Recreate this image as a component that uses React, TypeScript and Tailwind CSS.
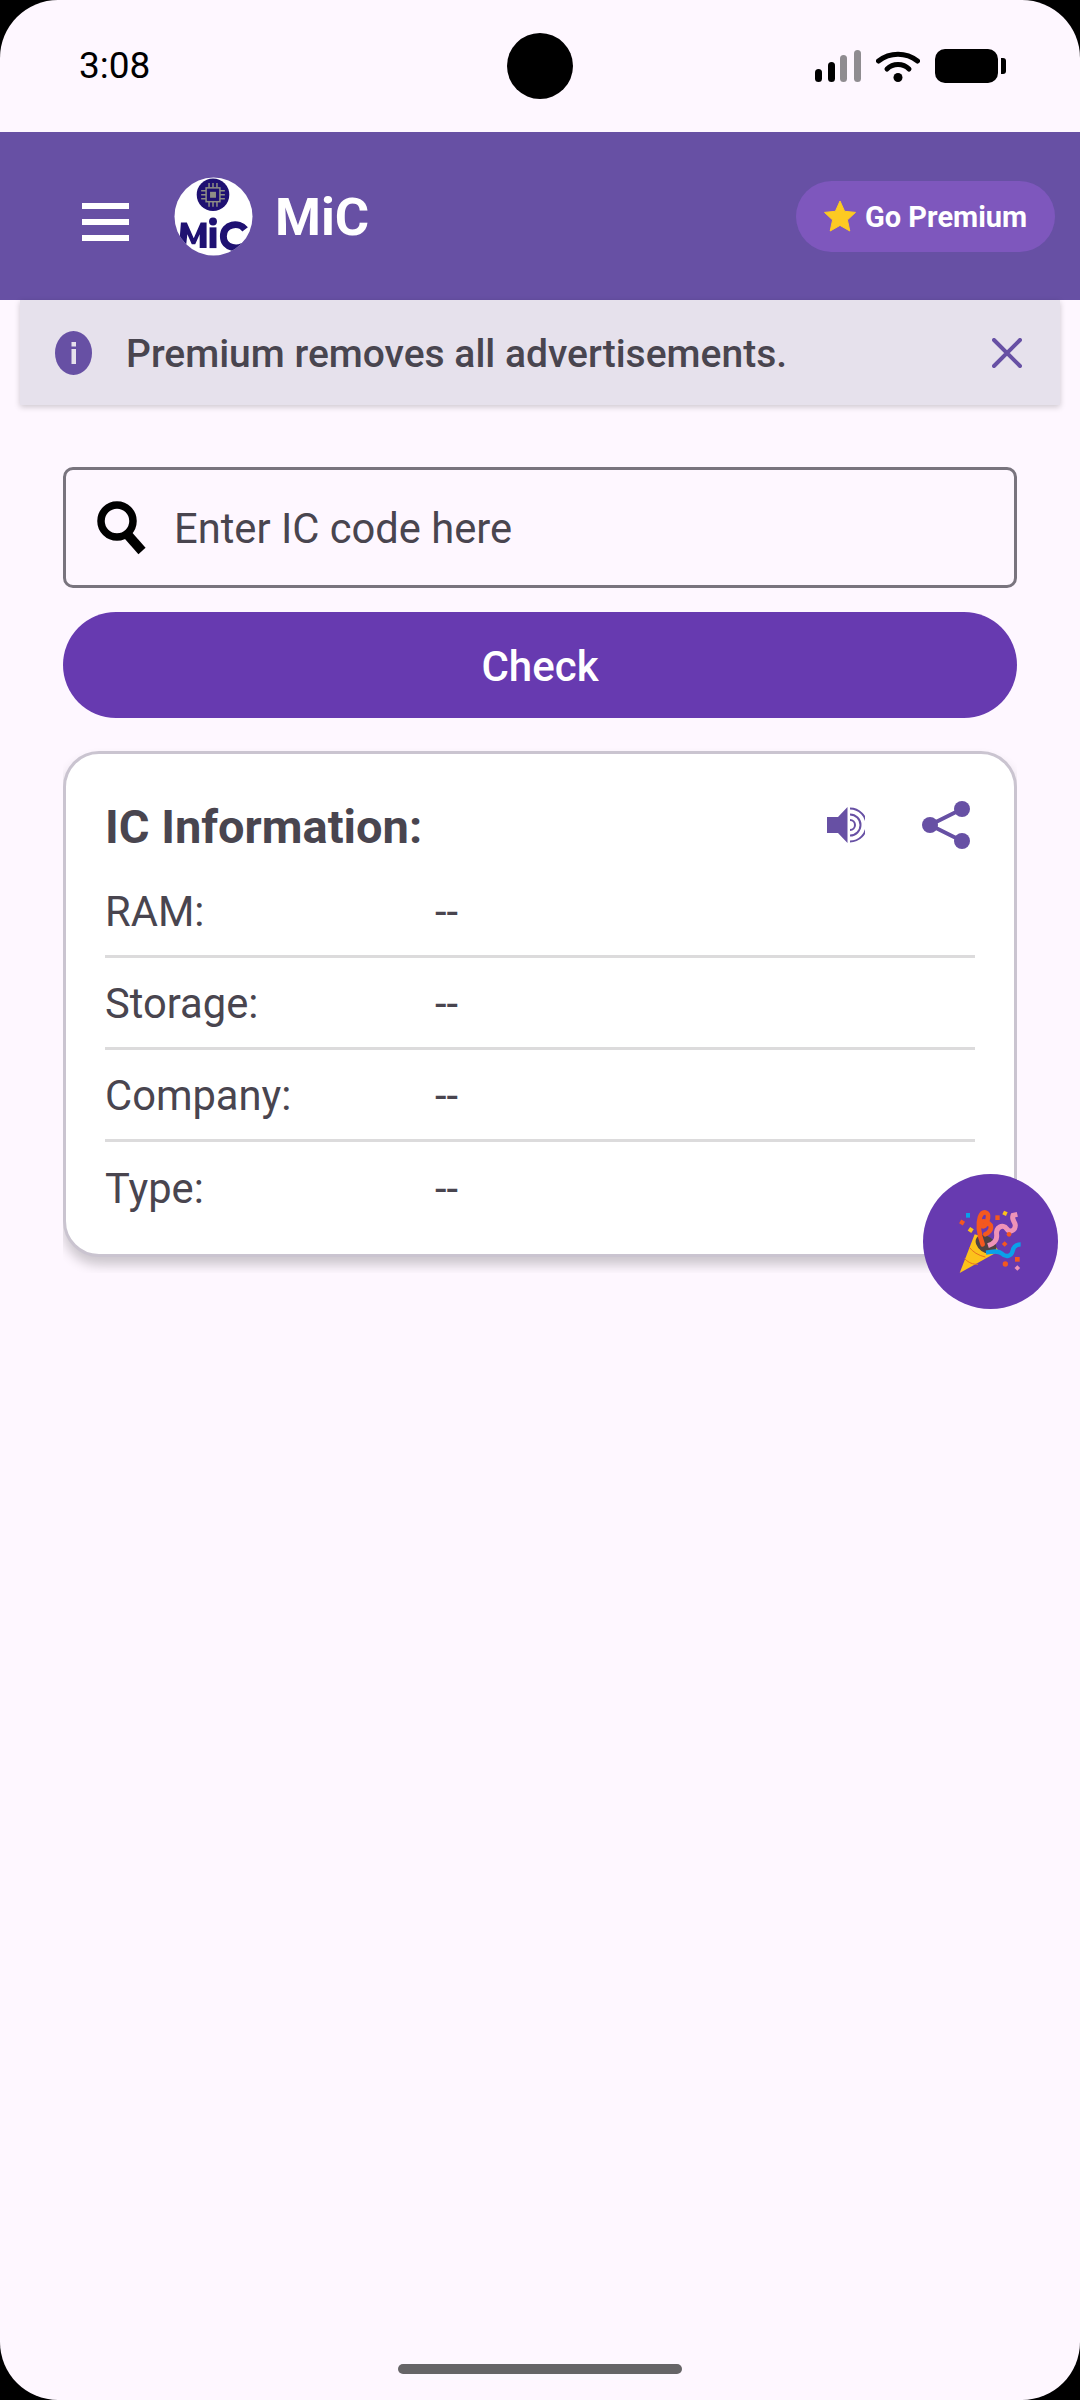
const font = { fontFamily: "Roboto, sans-serif" };

function Signal() {
  return (
    <svg width="46" height="32" viewBox="0 0 46 32" className="block">
      <rect x="0" y="19" width="7" height="13" rx="3.5" fill="#000" />
      <rect x="13" y="12" width="7" height="20" rx="3.5" fill="#000" />
      <rect x="25" y="5" width="7" height="27" rx="3.5" fill="#8f8c90" />
      <rect x="39" y="0" width="7" height="32" rx="3.5" fill="#8f8c90" />
    </svg>
  );
}

function Wifi() {
  return (
    <svg width="44" height="32" viewBox="0 0 44 32" className="block">
      <path d="M2.5 11 C 14 2, 30 2, 41.5 11" fill="none" stroke="#000" strokeWidth="5" strokeLinecap="round" />
      <path d="M11 19 C 17 13, 27 13, 33 19" fill="none" stroke="#000" strokeWidth="5" strokeLinecap="round" />
      <circle cx="22" cy="27.5" r="4.5" fill="#000" />
    </svg>
  );
}

function Battery() {
  return (
    <svg width="71" height="34" viewBox="0 0 71 34" className="block">
      <rect x="0" y="0" width="63" height="34" rx="10" fill="#000" />
      <path d="M66 9 h2 a3 3 0 0 1 3 3 v10 a3 3 0 0 1 -3 3 h-2 z" fill="#000" />
    </svg>
  );
}

function Logo() {
  return (
    <svg width="79" height="79" viewBox="0 0 80 80" className="block">
      <defs>
        <clipPath id="logoClip"><circle cx="40" cy="40" r="39.5" /></clipPath>
      </defs>
      <circle cx="40" cy="40" r="39.5" fill="#fff" />
      <g clipPath="url(#logoClip)">
        <circle cx="39.5" cy="18" r="16.5" fill="#1f1172" />
        <g stroke="#8f8f86" strokeWidth="1.5" fill="none">
          <rect x="32.5" y="11" width="14" height="14" />
          <path d="M35.5 6v5M39.5 6v5M43.5 6v5M35.5 25v5M39.5 25v5M43.5 25v5M27.5 14h5M27.5 18h5M27.5 22h5M46.5 14h5M46.5 18h5M46.5 22h5" />
        </g>
        <rect x="36.5" y="15" width="6" height="6" fill="#8f8f86" />
        <path d="M5 72 L7 46 h6 l7 16 l7 -16 h6 V72 h-7 V58 l-4.5 10 h-3.5 l-4.5 -10 L12 72 z" fill="#1f1172" />
        <rect x="36" y="51" width="7" height="21" fill="#1f1172" />
        <circle cx="39.5" cy="45" r="4" fill="#1f1172" />
        <path d="M72 53 C 66 45, 50 47, 50 60 C 50 73, 66 75, 74 67" fill="none" stroke="#1f1172" strokeWidth="7" />
      </g>
    </svg>
  );
}

function Star() {
  return (
    <svg width="32" height="32" viewBox="0 0 32 32" className="block">
      <path d="M16 1 L20.6 11.3 L31.5 12.4 L23.4 19.9 L25.8 31 L16 25.4 L6.2 31 L8.6 19.9 L0.5 12.4 L11.4 11.3 Z" fill="#fdca22" stroke="#fdca22" strokeWidth="1" strokeLinejoin="round" />
    </svg>
  );
}

function Info() {
  return (
    <svg width="37" height="44" viewBox="0 0 37 44" className="block">
      <ellipse cx="18.5" cy="22" rx="18.5" ry="22" fill="#6750a4" />
      <rect x="16.5" y="18" width="4.5" height="15" fill="#e6e1ec" />
      <rect x="16.5" y="11" width="4.5" height="4.5" fill="#e6e1ec" />
    </svg>
  );
}

function Close() {
  return (
    <svg width="30" height="30" viewBox="0 0 30 30" className="block">
      <path d="M2 2 L28 28 M28 2 L2 28" stroke="#6750a4" strokeWidth="4" strokeLinecap="round" />
    </svg>
  );
}

function Search() {
  return (
    <svg width="49" height="54" viewBox="0 0 49 54" className="block">
      <circle cx="20" cy="20" r="16" fill="none" stroke="#000" strokeWidth="7.5" />
      <path d="M30 33 L45 50" stroke="#000" strokeWidth="9.5" />
    </svg>
  );
}

function Speaker() {
  return (
    <svg width="38" height="36" viewBox="0 0 38 36" className="block">
      <path d="M0 10 H11 L20.5 0 V36 L11 26 H0 Z" fill="#6750a4" />
      <path d="M23 1.5 A16.5 16.5 0 0 1 23 34.5" fill="none" stroke="#6750a4" strokeWidth="2" />
      <path d="M23 7.5 A10.5 10.5 0 0 1 23 28.5" fill="none" stroke="#6750a4" strokeWidth="2" />
      <path d="M23 13 A5 5 0 0 1 23 23" fill="none" stroke="#6750a4" strokeWidth="2" />
    </svg>
  );
}

function Share() {
  return (
    <svg width="48" height="48" viewBox="0 0 48 48" className="block">
      <path d="M40 8 L8 24 L40 40" fill="none" stroke="#6750a4" strokeWidth="4" />
      <circle cx="40" cy="8" r="8" fill="#6750a4" />
      <circle cx="8" cy="24" r="8" fill="#6750a4" />
      <circle cx="40" cy="40" r="8" fill="#6750a4" />
    </svg>
  );
}

function Party() {
  return (
    <svg width="66" height="69" viewBox="150 150 198 207" className="block">
      <path d="M155 348 L200 232 C 225 238, 262 262, 272 283 Z" fill="#fcc21b" />
      <path d="M183 270 C 195 285, 210 295, 232 300 M170 305 C 182 318, 195 322, 210 322" fill="none" stroke="#e8711d" strokeWidth="3" />
      <ellipse cx="234" cy="262" rx="34" ry="24" transform="rotate(35 234 262)" fill="#4e4342" />
      <path d="M224 262 C 214 235, 208 205, 216 180 C 224 158, 244 165, 240 182 C 238 198, 230 215, 220 205 C 212 195, 228 185, 248 205 C 252 218, 240 230, 232 232" fill="none" stroke="#f4581f" strokeWidth="14" strokeLinecap="round" />
      <path d="M240 266 C 252 262, 268 252, 266 235 C 262 210, 285 200, 296 215 C 304 228, 322 222, 322 205 C 320 192, 310 188, 315 175 L328 172" fill="none" stroke="#ee93b7" strokeWidth="15" />
      <path d="M234 287 C 250 285, 268 278, 282 290 C 294 302, 310 298, 314 282 C 316 270, 324 262, 338 262" fill="none" stroke="#0aa0ea" strokeWidth="13" />
      <rect x="174" y="168" width="12" height="14" fill="#0aa0ea" />
      <rect x="156" y="190" width="13" height="13" transform="rotate(30 162 196)" fill="#f4581f" />
      <rect x="182" y="212" width="13" height="13" transform="rotate(35 188 218)" fill="#fcc21b" />
      <rect x="262" y="175" width="13" height="14" fill="#f4581f" />
      <rect x="285" y="163" width="12" height="12" transform="rotate(25 291 169)" fill="#fcc21b" />
      <circle cx="303" cy="232" r="7" fill="#f4581f" />
      <rect x="284" y="255" width="12" height="12" transform="rotate(45 290 261)" fill="#f4581f" />
      <rect x="321" y="300" width="14" height="14" fill="#f4581f" />
      <circle cx="292" cy="321" r="8" fill="#f4581f" />
      <rect x="322" y="327" width="12" height="12" transform="rotate(45 328 333)" fill="#ee93b7" />
    </svg>
  );
}

function Row({ label, last }: { label: string; last?: boolean }) {
  return (
    <div className={last ? "flex h-[92px] items-center pt-[2px]" : "flex h-[92px] items-center border-b-[3px] border-[#dcdbdc] pt-[2px]"}>
      <div className="w-[330px] text-[41.7px] leading-[48px] text-[#49454f]">{label}</div>
      <div className="text-[41.7px] leading-[48px] text-[#49454f]">--</div>
    </div>
  );
}

export default function App() {
  return (
    <div style={font} className="relative flex h-[2400px] w-[1080px] flex-col overflow-hidden bg-black">
      <div className="relative flex h-full flex-col overflow-hidden rounded-[58px] bg-[#fef7ff]">
        <div className="relative flex h-[132px] items-start justify-between pl-[79px] pr-[74px] pt-[44px]">
          <span className="text-[37px] leading-[44px] text-black">3:08</span>
          <div className="absolute left-[507px] top-[33px] h-[66px] w-[66px] rounded-full bg-black" />
          <div className="flex items-center gap-[15px] pt-[5px]">
            <Signal />
            <Wifi />
            <Battery />
          </div>
        </div>

        <div className="flex h-[168px] items-center bg-[#6750a4] pl-[82px] pr-[25px]">
          <div className="mt-[12px] flex w-[47px] flex-col gap-[10px]">
            <div className="h-[6px] bg-white" />
            <div className="h-[6px] bg-white" />
            <div className="h-[6px] bg-white" />
          </div>
          <div className="ml-[45px]"><Logo /></div>
          <div className="ml-[22px] mt-[2px] text-[52.5px] font-bold leading-[60px] text-white">MiC</div>
          <div className="ml-auto flex h-[71px] w-[259px] items-center rounded-full bg-[#7e57bd] pl-[28px]">
            <Star />
            <span className="ml-[9px] mt-[2px] text-[29px] font-bold leading-[36px] text-white">Go Premium</span>
          </div>
        </div>

        <div className="mx-[20px] flex h-[105px] items-center bg-[#e6e1ec] pl-[35px] pr-[38px] shadow-[0_2px_6px_rgba(0,0,0,0.2)]">
          <Info />
          <span className="ml-[34px] mt-[2px] text-[39px] font-medium leading-[46px] text-[#49454f]">Premium removes all advertisements.</span>
          <div className="ml-auto"><Close /></div>
        </div>

        <div className="mt-[62px] flex flex-col px-[63px]">
          <div className="flex h-[121px] items-center rounded-[10px] border-[3px] border-[#79747e] pl-[31px]">
            <Search />
            <span className="ml-[28px] mt-[3px] text-[41.7px] leading-[48px] text-[#49454f]">Enter IC code here</span>
          </div>
          <div className="mt-[24px] flex h-[106px] items-center justify-center rounded-full bg-[#673ab0] pt-[3px] text-[42px] font-medium leading-[48px] text-white">
            Check
          </div>
          <div className="mt-[28px] overflow-hidden pb-[16px] pt-[5px]">
            <div className="h-[506px] rounded-[36px] border-[3px] border-[#cac4d0] bg-white pl-[39px] pr-[39px] shadow-[0_8px_12px_rgba(0,0,0,0.2)]">
              <div className="flex h-[112px] items-center pt-[30px]">
                <span className="mt-[3px] text-[47px] font-bold leading-[54px] text-[#49454f]">IC Information:</span>
                <div className="ml-auto flex items-center gap-[57px] pr-[5px]">
                  <Speaker />
                  <Share />
                </div>
              </div>
              <div>
                <Row label="RAM:" />
                <Row label="Storage:" />
                <Row label="Company:" />
                <Row label="Type:" last />
              </div>
            </div>
          </div>
        </div>

        <div className="absolute left-[923px] top-[1174px] flex h-[135px] w-[135px] items-center justify-center rounded-full bg-[#673ab0]">
          <Party />
        </div>

        <div className="absolute bottom-[26px] left-[398px] h-[10px] w-[284px] rounded-full bg-[#666467]" />
      </div>
    </div>
  );
}
